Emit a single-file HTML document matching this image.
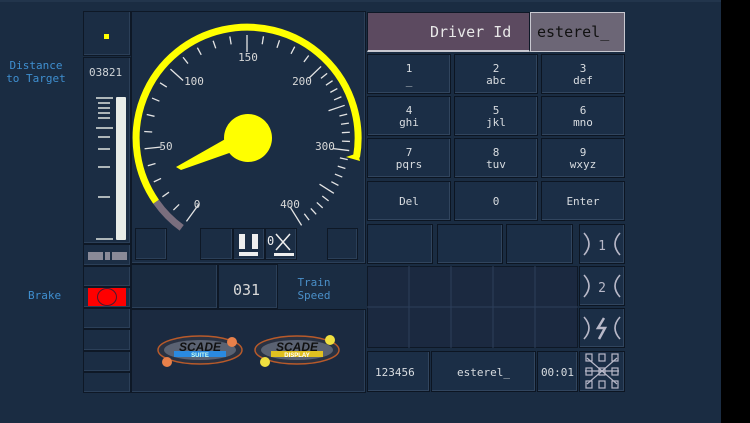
<!DOCTYPE html>
<html><head><meta charset="utf-8"><style>
*{margin:0;padding:0;box-sizing:border-box}
body{width:750px;height:423px;background:#1a2c42;position:relative;overflow:hidden;font-family:"DejaVu Sans Mono","Liberation Mono",monospace;color:#d0d4d8}
.b{position:absolute;background:#1b2d44;border:1px solid #0e1826;box-shadow:inset -1px -1px 0 #2b3f58}
.k{position:absolute;background:#1b2e46;border:1px solid #0c1522;box-shadow:inset -1px -1px 0 #31455e;text-align:center;font-size:11px;line-height:12px;color:#d8dce0}
.t{position:absolute;font-size:11px;color:#3f8fd0;text-align:center;line-height:13px}
</style></head><body>
<div style="position:absolute;left:721px;top:0;width:29px;height:423px;background:#000"></div>
<div style="position:absolute;left:0;top:0;width:721px;height:2px;background:#22354c"></div>

<div class="t" style="left:4px;top:59px;width:64px">Distance<br>to Target</div>
<div class="t" style="left:28px;top:289px">Brake</div>

<div class="b" style="left:83px;top:11px;width:48px;height:45px"></div>
<div style="position:absolute;left:104px;top:34px;width:5px;height:5px;background:#ffff00"></div>
<div class="b" style="left:83px;top:57px;width:48px;height:187px"></div>
<div style="position:absolute;left:89px;top:66px;font-size:11px">03821</div>
<div style="position:absolute;left:116px;top:97px;width:10px;height:143px;background:#e8ece8;border-radius:1px"></div>
<svg style="position:absolute;left:90px;top:95px" width="26" height="150"><g stroke="#e0e4e0" stroke-width="1.5">
<line x1="6" y1="3" x2="23" y2="3"/><line x1="8" y1="8" x2="20" y2="8"/><line x1="8" y1="13" x2="20" y2="13"/><line x1="8" y1="18" x2="20" y2="18"/><line x1="8" y1="23" x2="20" y2="23"/><line x1="6" y1="33" x2="23" y2="33"/><line x1="8" y1="42" x2="20" y2="42"/><line x1="8" y1="54" x2="20" y2="54"/><line x1="8" y1="72" x2="20" y2="72"/><line x1="8" y1="102" x2="20" y2="102"/><line x1="6" y1="144" x2="23" y2="144"/></g></svg>
<div class="b" style="left:83px;top:244px;width:48px;height:22px"></div>
<div style="position:absolute;left:88px;top:252px;width:15px;height:8px;background:#8a8a98"></div>
<div style="position:absolute;left:105px;top:252px;width:5px;height:8px;background:#8a8a98"></div>
<div style="position:absolute;left:112px;top:252px;width:15px;height:8px;background:#8a8a98"></div>
<div class="b" style="left:83px;top:266px;width:48px;height:21px"></div>
<div class="b" style="left:83px;top:287px;width:48px;height:21px"></div>
<div style="position:absolute;left:88px;top:288px;width:38px;height:18px;background:#ff0000"></div>
<div style="position:absolute;left:97px;top:288px;width:20px;height:18px;border:1.5px solid #4a1a30;border-radius:50%"></div>
<div class="b" style="left:83px;top:308px;width:48px;height:21px"></div>
<div class="b" style="left:83px;top:329px;width:48px;height:22px"></div>
<div class="b" style="left:83px;top:351px;width:48px;height:21px"></div>
<div class="b" style="left:83px;top:372px;width:48px;height:21px"></div>

<div class="b" style="left:131px;top:11px;width:235px;height:253px"></div>
<svg style="position:absolute;left:0;top:0" width="370" height="270">
<path d="M156.1 201.7 A111 111 0 1 1 356.5 157" fill="none" stroke="#ffff00" stroke-width="7"/>
<path d="M181.7 227.8 A111 111 0 0 1 156.1 201.7" fill="none" stroke="#7a6e7e" stroke-width="7"/>
<path d="M346 157 L360 161 L358 153 Z" fill="#ffff00"/>
<g stroke="#e4e4e4" stroke-width="1.3">
<line x1="247" y1="35" x2="247" y2="57" transform="rotate(-144 247 138)"/>
<line x1="247" y1="35" x2="247" y2="43" transform="rotate(-134.4 247 138)"/>
<line x1="247" y1="35" x2="247" y2="43" transform="rotate(-124.8 247 138)"/>
<line x1="247" y1="35" x2="247" y2="43" transform="rotate(-115.2 247 138)"/>
<line x1="247" y1="35" x2="247" y2="43" transform="rotate(-105.6 247 138)"/>
<line x1="247" y1="35" x2="247" y2="52" transform="rotate(-96 247 138)"/>
<line x1="247" y1="35" x2="247" y2="43" transform="rotate(-86.4 247 138)"/>
<line x1="247" y1="35" x2="247" y2="43" transform="rotate(-76.8 247 138)"/>
<line x1="247" y1="35" x2="247" y2="43" transform="rotate(-67.2 247 138)"/>
<line x1="247" y1="35" x2="247" y2="43" transform="rotate(-57.6 247 138)"/>
<line x1="247" y1="35" x2="247" y2="52" transform="rotate(-48 247 138)"/>
<line x1="247" y1="35" x2="247" y2="43" transform="rotate(-38.4 247 138)"/>
<line x1="247" y1="35" x2="247" y2="43" transform="rotate(-28.8 247 138)"/>
<line x1="247" y1="35" x2="247" y2="43" transform="rotate(-19.2 247 138)"/>
<line x1="247" y1="35" x2="247" y2="43" transform="rotate(-9.6 247 138)"/>
<line x1="247" y1="35" x2="247" y2="52" transform="rotate(0 247 138)"/>
<line x1="247" y1="35" x2="247" y2="43" transform="rotate(9.2 247 138)"/>
<line x1="247" y1="35" x2="247" y2="43" transform="rotate(18.4 247 138)"/>
<line x1="247" y1="35" x2="247" y2="43" transform="rotate(27.6 247 138)"/>
<line x1="247" y1="35" x2="247" y2="43" transform="rotate(36.8 247 138)"/>
<line x1="247" y1="35" x2="247" y2="52" transform="rotate(46 247 138)"/>
<line x1="247" y1="35" x2="247" y2="43" transform="rotate(51.1 247 138)"/>
<line x1="247" y1="35" x2="247" y2="43" transform="rotate(56.2 247 138)"/>
<line x1="247" y1="35" x2="247" y2="43" transform="rotate(61.3 247 138)"/>
<line x1="247" y1="35" x2="247" y2="43" transform="rotate(66.4 247 138)"/>
<line x1="247" y1="35" x2="247" y2="52" transform="rotate(71.5 247 138)"/>
<line x1="247" y1="35" x2="247" y2="43" transform="rotate(76.6 247 138)"/>
<line x1="247" y1="35" x2="247" y2="43" transform="rotate(81.7 247 138)"/>
<line x1="247" y1="35" x2="247" y2="43" transform="rotate(86.8 247 138)"/>
<line x1="247" y1="35" x2="247" y2="43" transform="rotate(91.9 247 138)"/>
<line x1="247" y1="35" x2="247" y2="52" transform="rotate(97 247 138)"/>
<line x1="247" y1="35" x2="247" y2="43" transform="rotate(102.1 247 138)"/>
<line x1="247" y1="35" x2="247" y2="43" transform="rotate(107.2 247 138)"/>
<line x1="247" y1="35" x2="247" y2="43" transform="rotate(112.3 247 138)"/>
<line x1="247" y1="35" x2="247" y2="43" transform="rotate(117.4 247 138)"/>
<line x1="247" y1="35" x2="247" y2="52" transform="rotate(122.5 247 138)"/>
<line x1="247" y1="35" x2="247" y2="43" transform="rotate(127.6 247 138)"/>
<line x1="247" y1="35" x2="247" y2="43" transform="rotate(132.7 247 138)"/>
<line x1="247" y1="35" x2="247" y2="43" transform="rotate(137.8 247 138)"/>
<line x1="247" y1="35" x2="247" y2="43" transform="rotate(142.9 247 138)"/>
<line x1="247" y1="35" x2="247" y2="57" transform="rotate(148 247 138)"/>
</g>
<g fill="#d8d8d8" font-family="DejaVu Sans Mono, monospace" font-size="11" text-anchor="middle">
<text x="197" y="208">0</text><text x="166" y="150">50</text><text x="194" y="85">100</text><text x="248" y="61">150</text><text x="302" y="85">200</text><text x="325" y="150">300</text><text x="290" y="208">400</text></g>
<polygon points="243,129 252,145 181,170 176,167" fill="#ffff00"/>
<circle cx="248" cy="138" r="24" fill="#ffff00"/>
</svg>
<div class="b" style="left:135px;top:228px;width:32px;height:32px"></div>
<div class="b" style="left:200px;top:228px;width:33px;height:32px"></div>
<div class="b" style="left:233px;top:228px;width:32px;height:32px"></div>
<div class="b" style="left:265px;top:228px;width:32px;height:32px"></div>
<div class="b" style="left:327px;top:228px;width:31px;height:32px"></div>
<div style="position:absolute;left:239px;top:234px;width:6px;height:15px;background:#eee"></div>
<div style="position:absolute;left:252px;top:234px;width:6px;height:15px;background:#eee"></div>
<div style="position:absolute;left:239px;top:252px;width:19px;height:4px;background:#eee"></div>
<div style="position:absolute;left:267px;top:234px;font-size:12px;color:#eee">0</div>
<svg style="position:absolute;left:274px;top:233px" width="20" height="25"><path d="M2 1L16 17M16 1L2 17" stroke="#eee" stroke-width="1.5"/><rect x="-6" y="20" width="26" height="3" fill="#eee"/></svg>

<div class="b" style="left:131px;top:264px;width:87px;height:45px;background:#1a2b40"></div>
<div class="b" style="left:218px;top:264px;width:60px;height:45px"></div>
<div style="position:absolute;left:233px;top:281px;font-size:15px;color:#d8d8d8">031</div>
<div class="t" style="left:293px;top:276px;width:42px;color:#4a8fc8">Train<br>Speed</div>

<div class="b" style="left:131px;top:309px;width:235px;height:84px;background:#1b2a40"></div>
<svg style="position:absolute;left:150px;top:330px" width="200" height="45">
<ellipse cx="50" cy="20" rx="42" ry="14" fill="#2a3242" stroke="#b85a2a" stroke-width="1.5"/>
<ellipse cx="50" cy="20" rx="36" ry="10" fill="#5a6272"/>
<rect x="24" y="21" width="52" height="6" fill="#2a8ae0"/>
<text x="50" y="21" text-anchor="middle" font-family="Liberation Sans" font-weight="bold" font-style="italic" font-size="12" fill="#111">SCADE</text>
<text x="50" y="27" text-anchor="middle" font-family="Liberation Sans" font-weight="bold" font-size="6" fill="#cfe">SUITE</text>
<circle cx="82" cy="12" r="5" fill="#e8804a"/><circle cx="17" cy="32" r="5" fill="#e8804a"/>
<ellipse cx="147" cy="20" rx="42" ry="14" fill="#2a3242" stroke="#b85a2a" stroke-width="1.5"/>
<ellipse cx="147" cy="20" rx="36" ry="10" fill="#5a6272"/>
<rect x="121" y="21" width="52" height="6" fill="#e0c020"/>
<text x="147" y="21" text-anchor="middle" font-family="Liberation Sans" font-weight="bold" font-style="italic" font-size="12" fill="#111">SCADE</text>
<text x="147" y="27" text-anchor="middle" font-family="Liberation Sans" font-weight="bold" font-size="6" fill="#fff">DISPLAY</text>
<circle cx="180" cy="10" r="5" fill="#f0e040"/><circle cx="115" cy="32" r="5" fill="#f0e040"/>
</svg>

<div style="position:absolute;left:367px;top:12px;width:163px;height:40px;background:#5c4a60;border:1px solid #0e1826;border-bottom:2px solid #c8c8d0"></div>
<div style="position:absolute;left:430px;top:23px;font-size:15px;color:#e8e8e8">Driver Id</div>
<div style="position:absolute;left:530px;top:12px;width:95px;height:40px;background:#6c6676;border:1.5px solid #c8c8d0"></div>
<div style="position:absolute;left:537px;top:23px;font-size:15px;color:#111">esterel_</div>

<div class="k" style="left:367px;top:54px;width:84px;height:40px;padding-top:8px">1<br>_</div>
<div class="k" style="left:454px;top:54px;width:84px;height:40px;padding-top:8px">2<br>abc</div>
<div class="k" style="left:541px;top:54px;width:84px;height:40px;padding-top:8px">3<br>def</div>
<div class="k" style="left:367px;top:96px;width:84px;height:40px;padding-top:8px">4<br>ghi</div>
<div class="k" style="left:454px;top:96px;width:84px;height:40px;padding-top:8px">5<br>jkl</div>
<div class="k" style="left:541px;top:96px;width:84px;height:40px;padding-top:8px">6<br>mno</div>
<div class="k" style="left:367px;top:138px;width:84px;height:40px;padding-top:8px">7<br>pqrs</div>
<div class="k" style="left:454px;top:138px;width:84px;height:40px;padding-top:8px">8<br>tuv</div>
<div class="k" style="left:541px;top:138px;width:84px;height:40px;padding-top:8px">9<br>wxyz</div>
<div class="k" style="left:367px;top:181px;width:84px;height:40px;padding-top:14px">Del</div>
<div class="k" style="left:454px;top:181px;width:84px;height:40px;padding-top:14px">0</div>
<div class="k" style="left:541px;top:181px;width:84px;height:40px;padding-top:14px">Enter</div>

<div class="k" style="left:367px;top:224px;width:66px;height:40px"></div>
<div class="k" style="left:437px;top:224px;width:66px;height:40px"></div>
<div class="k" style="left:506px;top:224px;width:67px;height:40px"></div>

<div style="position:absolute;left:367px;top:266px;width:211px;height:82px;background:#1b2940;border:1px solid #0e1826"></div>
<svg style="position:absolute;left:367px;top:266px" width="211" height="82"><g stroke="#2c3e5a" stroke-width="1"><line x1="42" y1="0" x2="42" y2="82"/><line x1="84" y1="0" x2="84" y2="82"/><line x1="126" y1="0" x2="126" y2="82"/><line x1="168" y1="0" x2="168" y2="82"/><line x1="0" y1="41" x2="211" y2="41"/></g></svg>

<div class="k" style="left:367px;top:351px;width:63px;height:41px;padding-top:15px;text-align:left;padding-left:7px">123456</div>
<div class="k" style="left:431px;top:351px;width:105px;height:41px;padding-top:15px">esterel_</div>
<div class="k" style="left:537px;top:351px;width:41px;height:41px;padding-top:15px">00:01</div>

<div class="k" style="left:579px;top:224px;width:46px;height:40px"></div>
<div class="k" style="left:579px;top:266px;width:46px;height:40px"></div>
<div class="k" style="left:579px;top:308px;width:46px;height:40px"></div>
<div class="k" style="left:579px;top:351px;width:46px;height:41px"></div>
<svg style="position:absolute;left:579px;top:224px" width="46" height="168" fill="none" stroke="#b8b8c8" stroke-width="1.6">
<path d="M5 9Q15 20 5 31M41 9Q31 20 41 31"/><text x="23" y="26" text-anchor="middle" font-family="DejaVu Sans Mono" font-size="13" fill="#b8b8c8" stroke="none">1</text>
<path d="M5 51Q15 62 5 73M41 51Q31 62 41 73"/><text x="23" y="68" text-anchor="middle" font-family="DejaVu Sans Mono" font-size="13" fill="#b8b8c8" stroke="none">2</text>
<path d="M5 93Q15 104 5 115M41 93Q31 104 41 115"/><path d="M25 94L19 104L26 104L20 115" stroke-width="2.5"/>
<g stroke-width="1.2"><path d="M8 134L38 160M38 134L8 160M6 147H40"/>
<rect x="7" y="130" width="6" height="7"/><rect x="20" y="130" width="6" height="7"/><rect x="33" y="130" width="6" height="7"/>
<rect x="7" y="144" width="6" height="7"/><rect x="20" y="144" width="6" height="7"/><rect x="33" y="144" width="6" height="7"/>
<rect x="7" y="157" width="6" height="7"/><rect x="20" y="157" width="6" height="7"/><rect x="33" y="157" width="6" height="7"/></g>
</svg>
</body></html>
